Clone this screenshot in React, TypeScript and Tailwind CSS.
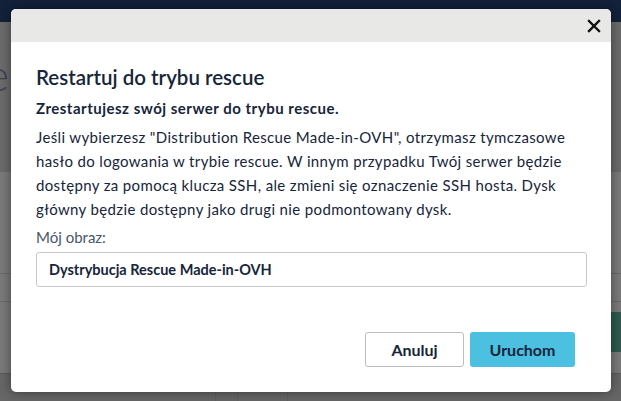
import React from 'react';

const font = { fontFamily: 'Lato, "Open Sans", sans-serif' };

const Backdrop: React.FC = () => (
  <div className="flex h-full w-full flex-col">
    <div className="h-[22px] bg-[#13213a]" />
    <div className="flex h-[150px] items-start bg-[#6b6b6b]">
      <span className="ml-[-14px] mt-[30px] text-[44px] font-light leading-none text-[#3c4250]">e</span>
    </div>
    <div className="flex flex-1 flex-col bg-[#7a7a7a]">
      <div className="h-[101px]" />
      <div className="h-[28px] border-t border-[#6a6a6a]" />
      <div className="h-[11px] border-t border-[#6a6a6a]" />
      <div className="ml-auto h-[40px] w-[10px] bg-[#2f5a4f]" />
      <div className="h-[21px]" />
      <div className="flex h-[28px] border-t border-[#5a5a5a] bg-[#666666]">
        <div className="w-[216px] border-r border-[#5f5f5f]" />
        <div className="w-[22px] border-r border-[#5f5f5f]" />
        <div className="w-[50px] border-r border-[#5f5f5f]" />
      </div>
    </div>
  </div>
);

export default function App() {
  return (
    <div className="relative h-[401px] w-[621px] overflow-hidden" style={font}>
      <Backdrop />
      <div className="absolute left-[11px] top-[9px] flex h-[383px] w-[600px] flex-col overflow-hidden rounded-[5px] bg-white shadow-[0_0_12px_rgba(0,0,0,0.45)]">
        <div className="flex h-[33px] items-center justify-end bg-[#e8e9e7] pr-[10px]">
          <svg width="14" height="14" viewBox="0 0 14 14" className="mt-[1px]">
            <path d="M2 2 L12 12 M12 2 L2 12" stroke="#111" strokeWidth="2.4" strokeLinecap="square" />
          </svg>
        </div>
        <div className="flex flex-1 flex-col pl-[25px] pr-[24px] text-[#17253a]">
          <h2 className="mt-[21px] text-[20.5px] leading-[28px] font-semibold">Restartuj do trybu rescue</h2>
          <p className="mt-[6px] text-[15px] leading-[22px] font-bold tracking-[0.5px]">
            Zrestartujesz swój serwer do trybu rescue.
          </p>
          <p className="mt-[6px] text-[15px] leading-[24px] tracking-[0.36px]">
            Jeśli wybierzesz "Distribution Rescue Made-in-OVH", otrzymasz tymczasowe hasło do logowania w trybie rescue.
            W innym przypadku Twój serwer będzie dostępny za pomocą klucza SSH, ale zmieni się oznaczenie SSH hosta.
            Dysk główny będzie dostępny jako drugi nie podmontowany dysk.
          </p>
          <label className="mt-[5px] text-[15px] leading-[22px] text-[#4a5668]">Mój obraz:</label>
          <div className="mt-[4px] flex h-[35px] items-center rounded-[3px] border border-[#c8c8c8] px-[12px] text-[14.5px] font-bold">
            Dystrybucja Rescue Made-in-OVH
          </div>
          <div className="mt-auto mb-[25px] flex justify-end gap-[6px] pr-[12px]">
            <button className="h-[35px] w-[99px] rounded-[3px] border border-[#bdbdbd] bg-white text-[16px] font-bold text-[#17253a]">
              Anuluj
            </button>
            <button className="h-[35px] w-[105px] rounded-[3px] bg-[#4bc0e0] text-[16px] font-bold text-[#17253a]">
              Uruchom
            </button>
          </div>
        </div>
      </div>
    </div>
  );
}
